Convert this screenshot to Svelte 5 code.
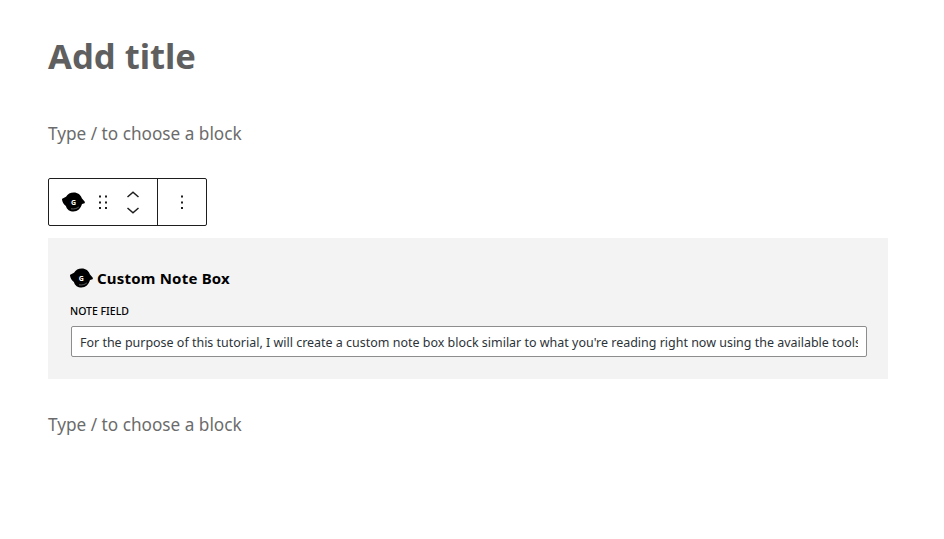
<script>
  const noteText =
    "For the purpose of this tutorial, I will create a custom note box block similar to what you're reading right now using the available tools in the editor";
</script>

{#snippet logo()}
  <svg class="logo" width="23" height="20" viewBox="0 0 23 20">
    <path d="M.2 6.800 4 4.800C5.600 1.800 8.400.4 11.800.4c4 0 7 2.200 8 5.800l2.800 3.400c.6.8.2 1.700-.8 2l-1.800.5c-1.200 4.500-4.400 7.400-8.500 7.400-3.800 0-6.600-2-7.600-5.600C1.800 12.600.4 10.200 0 7.600c0-.3 0-.6.200-.8Z" fill="#000" />
    <path d="M9 16.800c3 .5 5.600-.1 7.800-1.800" fill="none" stroke="#777" stroke-width=".8" />
    <text x="11.500" y="12.500" class="logo-g">G</text>
  </svg>
{/snippet}

<div class="editor">
  <h1 class="title">Add title</h1>
  <p class="placeholder first">Type / to choose a block</p>

  <div class="toolbar">
    <div class="main">
      {@render logo()}
      <svg class="drag" width="24" height="24" viewBox="0 0 24 24">
        <path d="M8 5.500h2v2H8zM14 5.500h2v2h-2zM8 11.500h2v2H8zM14 11.500h2v2h-2zM8 17h2v2H8zM14 17h2v2h-2z" fill="#1e1e1e" />
      </svg>
      <div class="movers">
        <svg width="12" height="7" viewBox="0 0 12 7"><path d="M.5 6 6 1.200 11.500 6" fill="none" stroke="#1e1e1e" stroke-width="1.500" /></svg>
        <svg width="12" height="7" viewBox="0 0 12 7"><path d="M.5 1 6 5.800 11.500 1" fill="none" stroke="#1e1e1e" stroke-width="1.500" /></svg>
      </div>
    </div>
    <div class="more">
      <svg width="24" height="24" viewBox="0 0 24 24">
        <path d="M11 5.500h2v2h-2zM11 11.500h2v2h-2zM11 17h2v2h-2z" fill="#1e1e1e" />
      </svg>
    </div>
  </div>

  <section class="note-box">
    <div class="note-head">
      {@render logo()}
      <span>Custom Note Box</span>
    </div>
    <label class="field-label" for="note">NOTE FIELD</label>
    <input id="note" class="field" type="text" value={noteText} />
  </section>

  <p class="placeholder last">Type / to choose a block</p>
</div>

<style>
  :global(body) {
    background: #fff;
    font-family: "Noto Sans", sans-serif;
  }

  .editor {
    width: 840px;
    margin-left: 48px;
    padding-top: 33px;
  }

  .title {
    margin: 0;
    font-size: 34.6px;
    line-height: 46px;
    font-weight: 700;
    color: #5f5f5f;
  }

  .placeholder {
    margin: 0;
    font-size: 17.2px;
    line-height: 26px;
    color: #6b6b6b;
  }

  .first {
    margin-top: 42px;
  }

  .toolbar {
    display: flex;
    width: 159px;
    height: 48px;
    box-sizing: border-box;
    margin-top: 31px;
    border: 1px solid #1e1e1e;
    border-radius: 2px;
  }

  .main {
    display: flex;
    align-items: center;
    width: 109px;
    box-sizing: border-box;
    padding-left: 13px;
    border-right: 1px solid #1e1e1e;
  }

  .drag {
    margin-left: 6px;
  }

  .more {
    display: flex;
    flex: 1;
    align-items: center;
    justify-content: center;
  }

  .movers {
    display: flex;
    flex-direction: column;
    gap: 9px;
    margin-left: 12px;
  }

  .movers svg {
    display: block;
  }

  .logo-g {
    font-size: 7px;
    font-weight: 700;
    text-anchor: middle;
    fill: #fff;
  }

  .note-box {
    margin-top: 12px;
    height: 141px;
    box-sizing: border-box;
    padding: 28px 21px 0 23px;
    background: #f3f3f3;
  }

  .note-head {
    display: flex;
    align-items: center;
    gap: 3px;
    height: 24px;
    font-size: 15px;
    letter-spacing: 0.2px;
    font-weight: 700;
    color: #000;
  }

  .note-head .logo {
    flex: none;
    margin-left: -1px;
  }

  .note-head span {
    margin-left: 1px;
  }

  .field-label {
    display: block;
    margin: 14px 0 0 -1px;
    font-size: 10.5px;
    line-height: 14px;
    font-weight: 500;
    color: #000;
  }

  .field {
    display: block;
    width: 100%;
    height: 31px;
    box-sizing: border-box;
    margin-top: 8px;
    padding: 1px 8px 0;
    border: 1px solid #8d8d8d;
    border-radius: 2px;
    background: #fff;
    font-family: "Noto Sans", sans-serif;
    font-size: 12.47px;
    color: #2c3338;
  }

  .last {
    margin-top: 33px;
  }
</style>
